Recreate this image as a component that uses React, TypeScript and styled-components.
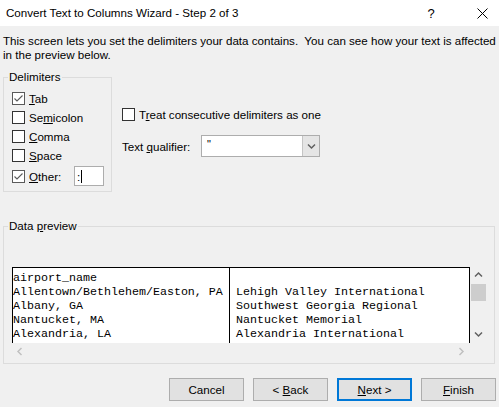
import React from "react";
import styled, { createGlobalStyle } from "styled-components";

const UI_FONT = `"Liberation Sans", Arial, sans-serif`;
const MONO_FONT = `"Liberation Mono", "Courier New", monospace`;

const Global = createGlobalStyle`
  html, body { margin: 0; padding: 0; background: #f0f0f0; }
  body { font-family: ${UI_FONT}; font-size: 11.6px; color: #000; }
  * { box-sizing: border-box; }
`;

const Window = styled.div`
  width: 499px;
  height: 407px;
  background: #f0f0f0;
  display: flex;
  flex-direction: column;
  overflow: hidden;
`;

const TitleBar = styled.div`
  height: 26px;
  background: #fff;
  display: flex;
  align-items: center;
  padding-left: 6px;
  flex-shrink: 0;
`;

const Title = styled.div`
  flex: 1;
  font-size: 11.6px;
  line-height: 14px;
`;

const CaptionButton = styled.div<{ $gap?: number }>`
  width: 34px;
  height: 26px;
  display: flex;
  align-items: center;
  justify-content: center;
  margin-right: ${(p) => p.$gap ?? 0}px;
  font-size: 13px;
`;

const Description = styled.div`
  padding: 8px 0 0 3px;
  line-height: 14px;
  white-space: pre-wrap;
`;

const OptionsRow = styled.div`
  display: flex;
  gap: 10px;
  margin-top: 8px;
  padding-left: 3px;
`;

const Group = styled.fieldset<{ $w: number; $h: number; $pad: string }>`
  margin: 0;
  min-width: 0;
  width: ${(p) => p.$w}px;
  height: ${(p) => p.$h}px;
  border: 1px solid #dcdcdc;
  padding: ${(p) => p.$pad};
  flex-shrink: 0;
`;

const Legend = styled.legend`
  padding: 0 1px;
  margin-left: -4px;
  line-height: 14px;
  height: 14px;
`;

const U = styled.span`
  text-decoration: underline;
  text-underline-offset: 1px;
`;

const CheckRow = styled.div<{ $h?: number; $mt?: number }>`
  display: flex;
  align-items: center;
  height: ${(p) => p.$h ?? 19}px;
  margin-top: ${(p) => p.$mt ?? 0}px;
  gap: 4px;
`;

const Box = styled.div<{ $checked?: boolean }>`
  width: 13px;
  height: 13px;
  border: 1px solid ${(p) => (p.$checked ? "#5a5a5a" : "#333")};
  background: #fff;
  display: flex;
  align-items: center;
  justify-content: center;
  flex-shrink: 0;
`;

const OtherInput = styled.div`
  margin-left: auto;
  width: 30px;
  height: 20px;
  border: 1px solid #adadad;
  background: #fff;
  display: flex;
  align-items: center;
  padding-left: 2px;
`;

const Caret = styled.span`
  display: inline-block;
  width: 1px;
  height: 13px;
  background: #000;
  margin-left: 1px;
`;

const RightColumn = styled.div`
  display: flex;
  flex-direction: column;
  padding-top: 35px;
`;

const QualifierRow = styled.div`
  display: flex;
  align-items: center;
  margin-top: 11px;
`;

const QualifierLabel = styled.div`
  width: 79px;
`;

const Select = styled.div`
  width: 119px;
  height: 22px;
  border: 1px solid #adadad;
  background: #fff;
  display: flex;
`;

const SelectValue = styled.div`
  flex: 1;
  padding: 2px 0 0 5px;
  font-size: 11px;
  line-height: 12px;
`;

const SelectButton = styled.div`
  width: 17px;
  background: #e5e5e5;
  border-left: 1px solid #c5c5c5;
  display: flex;
  align-items: center;
  justify-content: center;
`;

const PreviewGroupWrap = styled.div`
  margin-top: 27px;
  padding-left: 3px;
`;

const PreviewGrid = styled.div`
  display: grid;
  grid-template-columns: 458px 17px;
  grid-template-rows: 76px 16px;
  width: 475px;
  height: 92px;
`;

const List = styled.div`
  border: 1px solid #000;
  border-bottom: none;
  background: #fff;
  display: flex;
  overflow: hidden;
  font-family: ${MONO_FONT};
  font-size: 11.67px;
  line-height: 14px;
  color: #000;
`;

const Column = styled.div<{ $w?: number; $divider?: boolean }>`
  ${(p) => (p.$w ? `width: ${p.$w}px; flex-shrink: 0;` : "flex: 1;")}
  ${(p) => (p.$divider ? "border-left: 1px solid #000; padding-left: 6px;" : "")}
  padding-top: 3px;
  white-space: pre;
`;

const Cell = styled.div`
  height: 14px;
`;

const VScroll = styled.div`
  display: flex;
  flex-direction: column;
`;

const ScrollArrow = styled.div<{ $w: number; $h: number }>`
  width: ${(p) => p.$w}px;
  height: ${(p) => p.$h}px;
  display: flex;
  align-items: center;
  justify-content: center;
  flex-shrink: 0;
`;

const Thumb = styled.div`
  width: 15px;
  height: 17px;
  margin-left: 1px;
  background: #cdcdcd;
`;

const Spacer = styled.div`
  flex: 1;
`;

const HScroll = styled.div`
  display: flex;
`;

const ButtonRow = styled.div`
  display: flex;
  justify-content: flex-end;
  gap: 9px;
  margin-top: 14px;
  padding-right: 3px;
`;

const Button = styled.div<{ $primary?: boolean }>`
  width: 75px;
  height: 23px;
  background: #e1e1e1;
  border: ${(p) => (p.$primary ? "2px solid #0078d7" : "1px solid #adadad")};
  display: flex;
  align-items: center;
  justify-content: center;
  line-height: 14px;
  white-space: pre;
`;

const Check = () => (
  <svg width="11" height="11" viewBox="0 0 11 11">
    <polyline points="1.5,5.5 4,8 9.5,2.5" fill="none" stroke="#5a5a5a" strokeWidth="1.1" />
  </svg>
);

const Chevron = ({ dir, color }: { dir: "up" | "down" | "left" | "right"; color: string }) => {
  const pts: Record<string, string> = {
    up: "1,5.5 4.5,2 8,5.5",
    down: "1,2.5 4.5,6 8,2.5",
    left: "5.5,1 2,4.5 5.5,8",
    right: "2.5,1 6,4.5 2.5,8",
  };
  return (
    <svg width="9" height="9" viewBox="0 0 9 9">
      <polyline points={pts[dir]} fill="none" stroke={color} strokeWidth="1.5" />
    </svg>
  );
};

const CloseIcon = () => (
  <svg width="11" height="11" viewBox="0 0 11 11">
    <path d="M0.5,0.5 L10.5,10.5 M10.5,0.5 L0.5,10.5" stroke="#000" strokeWidth="1" />
  </svg>
);

const delimiters = [
  { pre: "", key: "T", post: "ab", checked: true },
  { pre: "Se", key: "m", post: "icolon", checked: false },
  { pre: "", key: "C", post: "omma", checked: false },
  { pre: "", key: "S", post: "pace", checked: false },
];

const col1 = [
  "airport_name",
  "Allentown/Bethlehem/Easton, PA",
  "Albany, GA",
  "Nantucket, MA",
  "Alexandria, LA",
];
const col2 = [
  "",
  "Lehigh Valley International",
  "Southwest Georgia Regional",
  "Nantucket Memorial",
  "Alexandria International",
];

export default function App() {
  return (
    <>
      <Global />
      <Window>
        <TitleBar>
          <Title>Convert Text to Columns Wizard - Step 2 of 3</Title>
          <CaptionButton $gap={17}>?</CaptionButton>
          <CaptionButton>
            <CloseIcon />
          </CaptionButton>
        </TitleBar>

        <Description>
          {"This screen lets you set the delimiters your data contains.  You can see how your text is affected\nin the preview below."}
        </Description>

        <OptionsRow>
          <Group $w={109} $h={122} $pad="5px 7px 0 8px">
            <Legend>Delimiters</Legend>
            {delimiters.map((d) => (
              <CheckRow key={d.post}>
                <Box $checked={d.checked}>{d.checked && <Check />}</Box>
                <span>
                  {d.pre}
                  <U>{d.key}</U>
                  {d.post}
                </span>
              </CheckRow>
            ))}
            <CheckRow $h={20} $mt={1}>
              <Box $checked>
                <Check />
              </Box>
              <span>
                <U>O</U>ther:
              </span>
              <OtherInput>
                :<Caret />
              </OtherInput>
            </CheckRow>
          </Group>

          <RightColumn>
            <CheckRow>
              <Box />
              <span>
                T<U>r</U>eat consecutive delimiters as one
              </span>
            </CheckRow>
            <QualifierRow>
              <QualifierLabel>
                Text <U>q</U>ualifier:
              </QualifierLabel>
              <Select>
                <SelectValue>"</SelectValue>
                <SelectButton>
                  <Chevron dir="down" color="#606060" />
                </SelectButton>
              </Select>
            </QualifierRow>
          </RightColumn>
        </OptionsRow>

        <PreviewGroupWrap>
          <Group $w={492} $h={145} $pad="34px 7px 4px 8px">
            <Legend>
              Data <U>p</U>review
            </Legend>
            <PreviewGrid>
              <List>
                <Column $w={216}>
                  {col1.map((t, i) => (
                    <Cell key={i}>{t}</Cell>
                  ))}
                </Column>
                <Column $divider>
                  {col2.map((t, i) => (
                    <Cell key={i}>{t}</Cell>
                  ))}
                </Column>
              </List>
              <VScroll>
                <ScrollArrow $w={17} $h={17}>
                  <Chevron dir="up" color="#606060" />
                </ScrollArrow>
                <Thumb />
                <Spacer />
                <ScrollArrow $w={17} $h={17}>
                  <Chevron dir="down" color="#606060" />
                </ScrollArrow>
              </VScroll>
              <HScroll>
                <ScrollArrow $w={17} $h={16}>
                  <Chevron dir="left" color="#c0c0c0" />
                </ScrollArrow>
                <Spacer />
                <ScrollArrow $w={17} $h={16}>
                  <Chevron dir="right" color="#c0c0c0" />
                </ScrollArrow>
              </HScroll>
              <div />
            </PreviewGrid>
          </Group>
        </PreviewGroupWrap>

        <ButtonRow>
          <Button>Cancel</Button>
          <Button>
            <span>{"< "}</span>
            <U>B</U>
            <span>ack</span>
          </Button>
          <Button $primary>
            <U>N</U>
            <span>{"ext >"}</span>
          </Button>
          <Button>
            <U>F</U>
            <span>inish</span>
          </Button>
        </ButtonRow>
      </Window>
    </>
  );
}
